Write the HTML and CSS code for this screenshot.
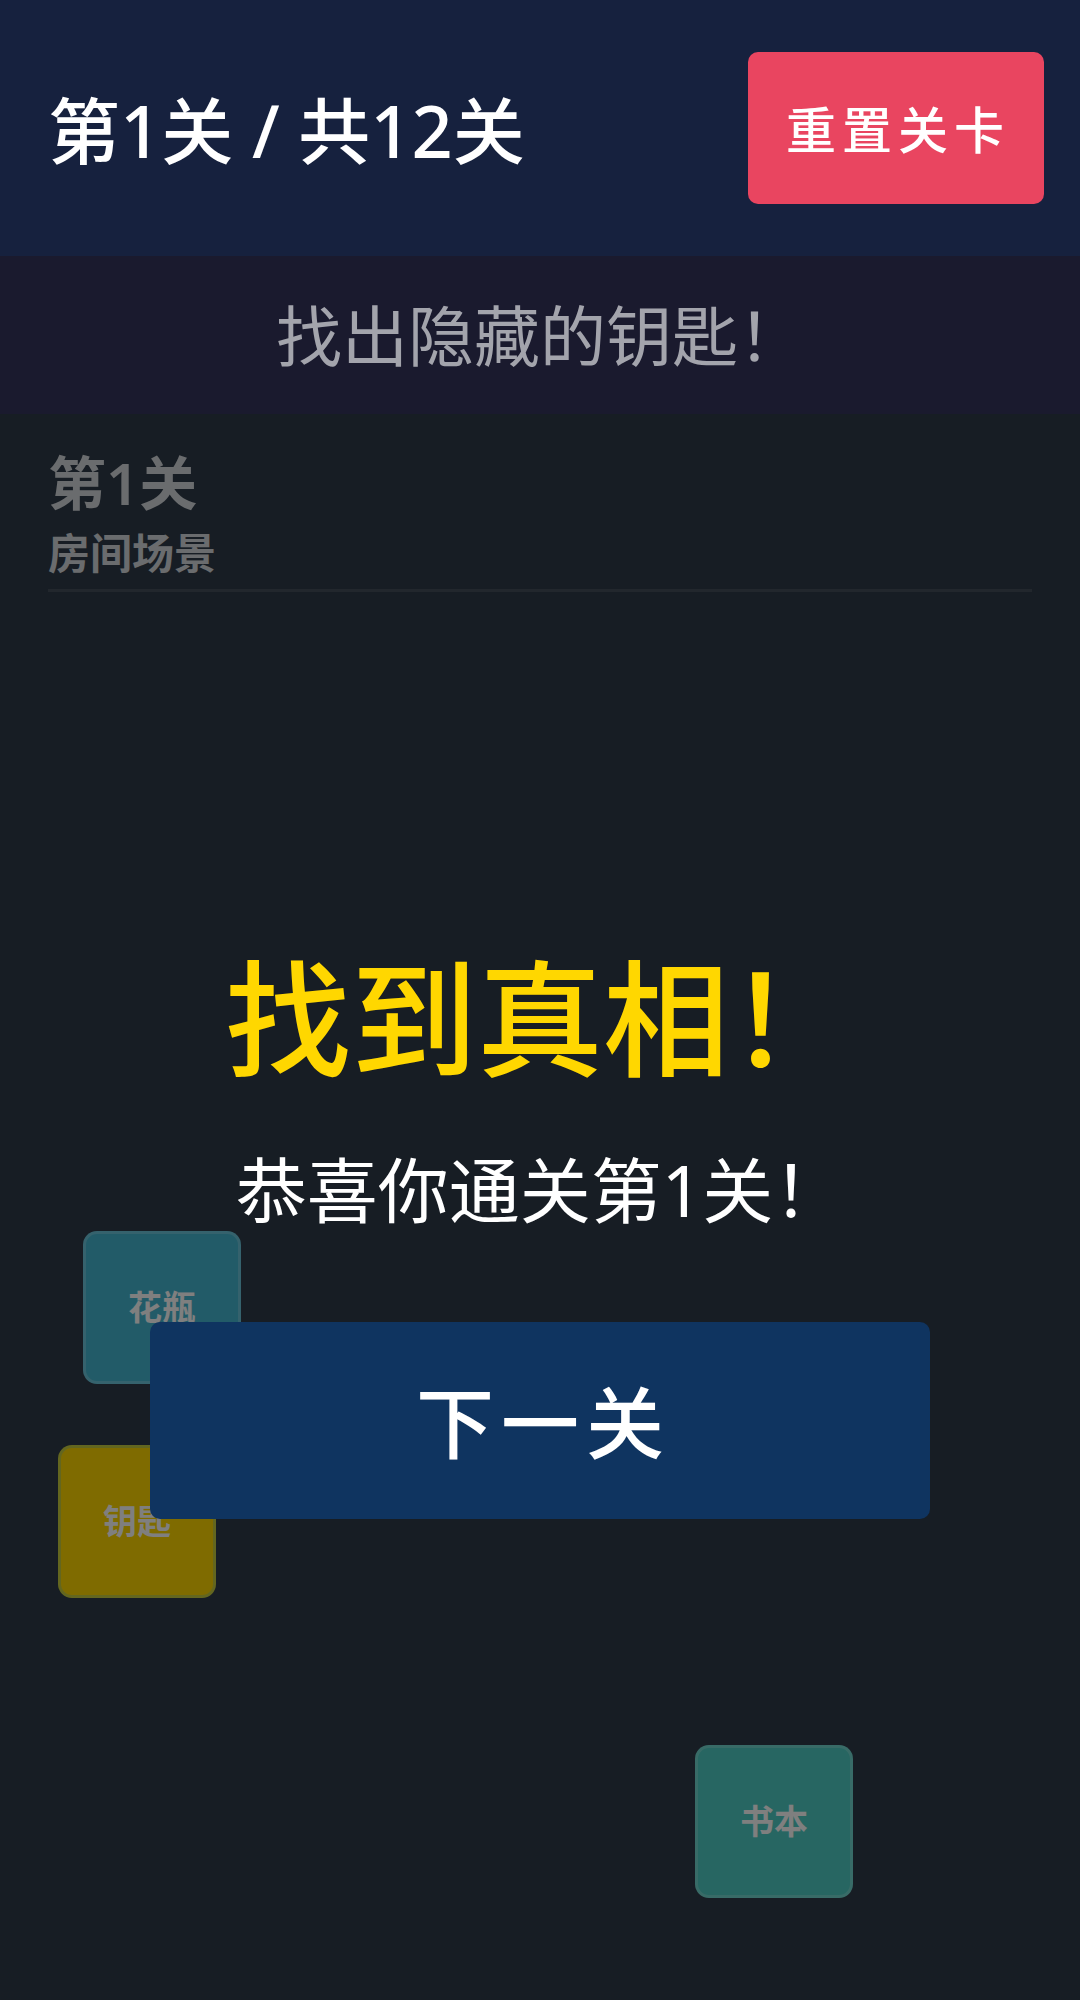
FILE: index.html
```html
<!DOCTYPE html>
<html lang="zh-CN">
<head>
    <meta charset="UTF-8">
    <meta name="viewport" content="width=device-width, initial-scale=1.0">
    <title>找出隐藏的钥匙</title>
    <link rel="stylesheet" href="styles.css">
</head>
<body>

<div class="game">
    <header class="top-bar">
        <h1>第1关 / 共12关</h1>
        <button type="button" class="reset-button">重置关卡</button>
    </header>

    <p class="hint">找出隐藏的钥匙！</p>

    <main class="scene">
        <div class="scene-header">
            <h2>第1关</h2>
            <p>房间场景</p>
        </div>

        <!-- 场景物品 -->
        <button type="button" class="item vase">花瓶</button>
        <button type="button" class="item key">钥匙</button>
        <button type="button" class="item book">书本</button>

        <!-- 通关提示 -->
        <div class="overlay" role="dialog" aria-labelledby="win-title">
            <h2 id="win-title" class="win-title">找到真相！</h2>
            <p class="win-text">恭喜你通关第1关！</p>
            <button type="button" class="next-button">下一关</button>
        </div>
    </main>
</div>

</body>
</html>
```
FILE: styles.css
```css
* {
    box-sizing: border-box;
}
body {
    margin: 0;
    background-color: #1a1a2e;
    color: #fff;
    font-family: "Noto Sans", "Noto Sans CJK SC", sans-serif;
}
h1, h2, p {
    margin: 0;
}
button {
    border: none;
    color: #fff;
    font-family: inherit;
    cursor: pointer;
}
.game {
    display: flex;
    flex-direction: column;
    min-height: 100vh;
}

/* 顶部栏 */
.top-bar {
    display: flex;
    align-items: center;
    justify-content: space-between;
    padding: 52px 36px 52px 48px;
    background-color: #16213e;
}
.top-bar h1 {
    padding-top: 4px;
    font-size: 72px;
    font-weight: 500;
    line-height: 100px;
}
.reset-button {
    padding: 42px 34px 38px 38px;
    border-radius: 10px;
    background-color: #e94560;
    font-size: 50px;
    font-weight: 500;
    line-height: 72px;
    letter-spacing: 6px;
}
.hint {
    padding: 32px 48px;
    background-color: #1a1a2e;
    color: #a3a4ac;
    font-size: 66px;
    line-height: 94px;
    text-align: center;
}

/* 场景 */
.scene {
    position: relative;
    flex: 1;
    padding: 32px 48px;
    background-color: #2e3a48;
}
.scene-header {
    padding-bottom: 6px;
    border-bottom: 3px solid #454f5a;
    color: #d4d8dc;
}
.scene-header h2 {
    font-size: 58px;
    font-weight: 600;
    line-height: 74px;
}
.scene-header p {
    padding-top: 3px;
    font-size: 42px;
    font-weight: 600;
    line-height: 60px;
}
.item {
    position: absolute;
    width: 158px;
    height: 153px;
    padding: 0 0 4px;
    border: 3px solid rgba(255, 255, 255, 0.2);
    border-radius: 14px;
    font-size: 34px;
    font-weight: 600;
}
.vase {
    left: 83px;
    top: 817px;
    background-color: #45b7d1;
}
.key {
    left: 58px;
    top: 1031px;
    border-color: rgba(69, 183, 209, 0.3);
    background-color: #ffd700;
}
.book {
    left: 695px;
    top: 1331px;
    background-color: #4ecdc4;
}

/* 通关弹层 */
.overlay {
    position: absolute;
    inset: 0;
    display: flex;
    flex-direction: column;
    align-items: center;
    justify-content: center;
    padding: 36px 150px 0;
    background-color: rgba(0, 0, 0, 0.5);
}
.win-title {
    margin-bottom: 34px;
    color: #ffd700;
    font-size: 126px;
    font-weight: 500;
    line-height: 174px;
}
.win-text {
    margin-bottom: 82px;
    font-size: 71px;
    line-height: 101px;
}
.next-button {
    width: 100%;
    padding: 51px 0 45px 7px;
    border-radius: 10px;
    background-color: #0f3460;
    font-size: 78px;
    font-weight: 500;
    line-height: 101px;
    letter-spacing: 7px;
}
```
